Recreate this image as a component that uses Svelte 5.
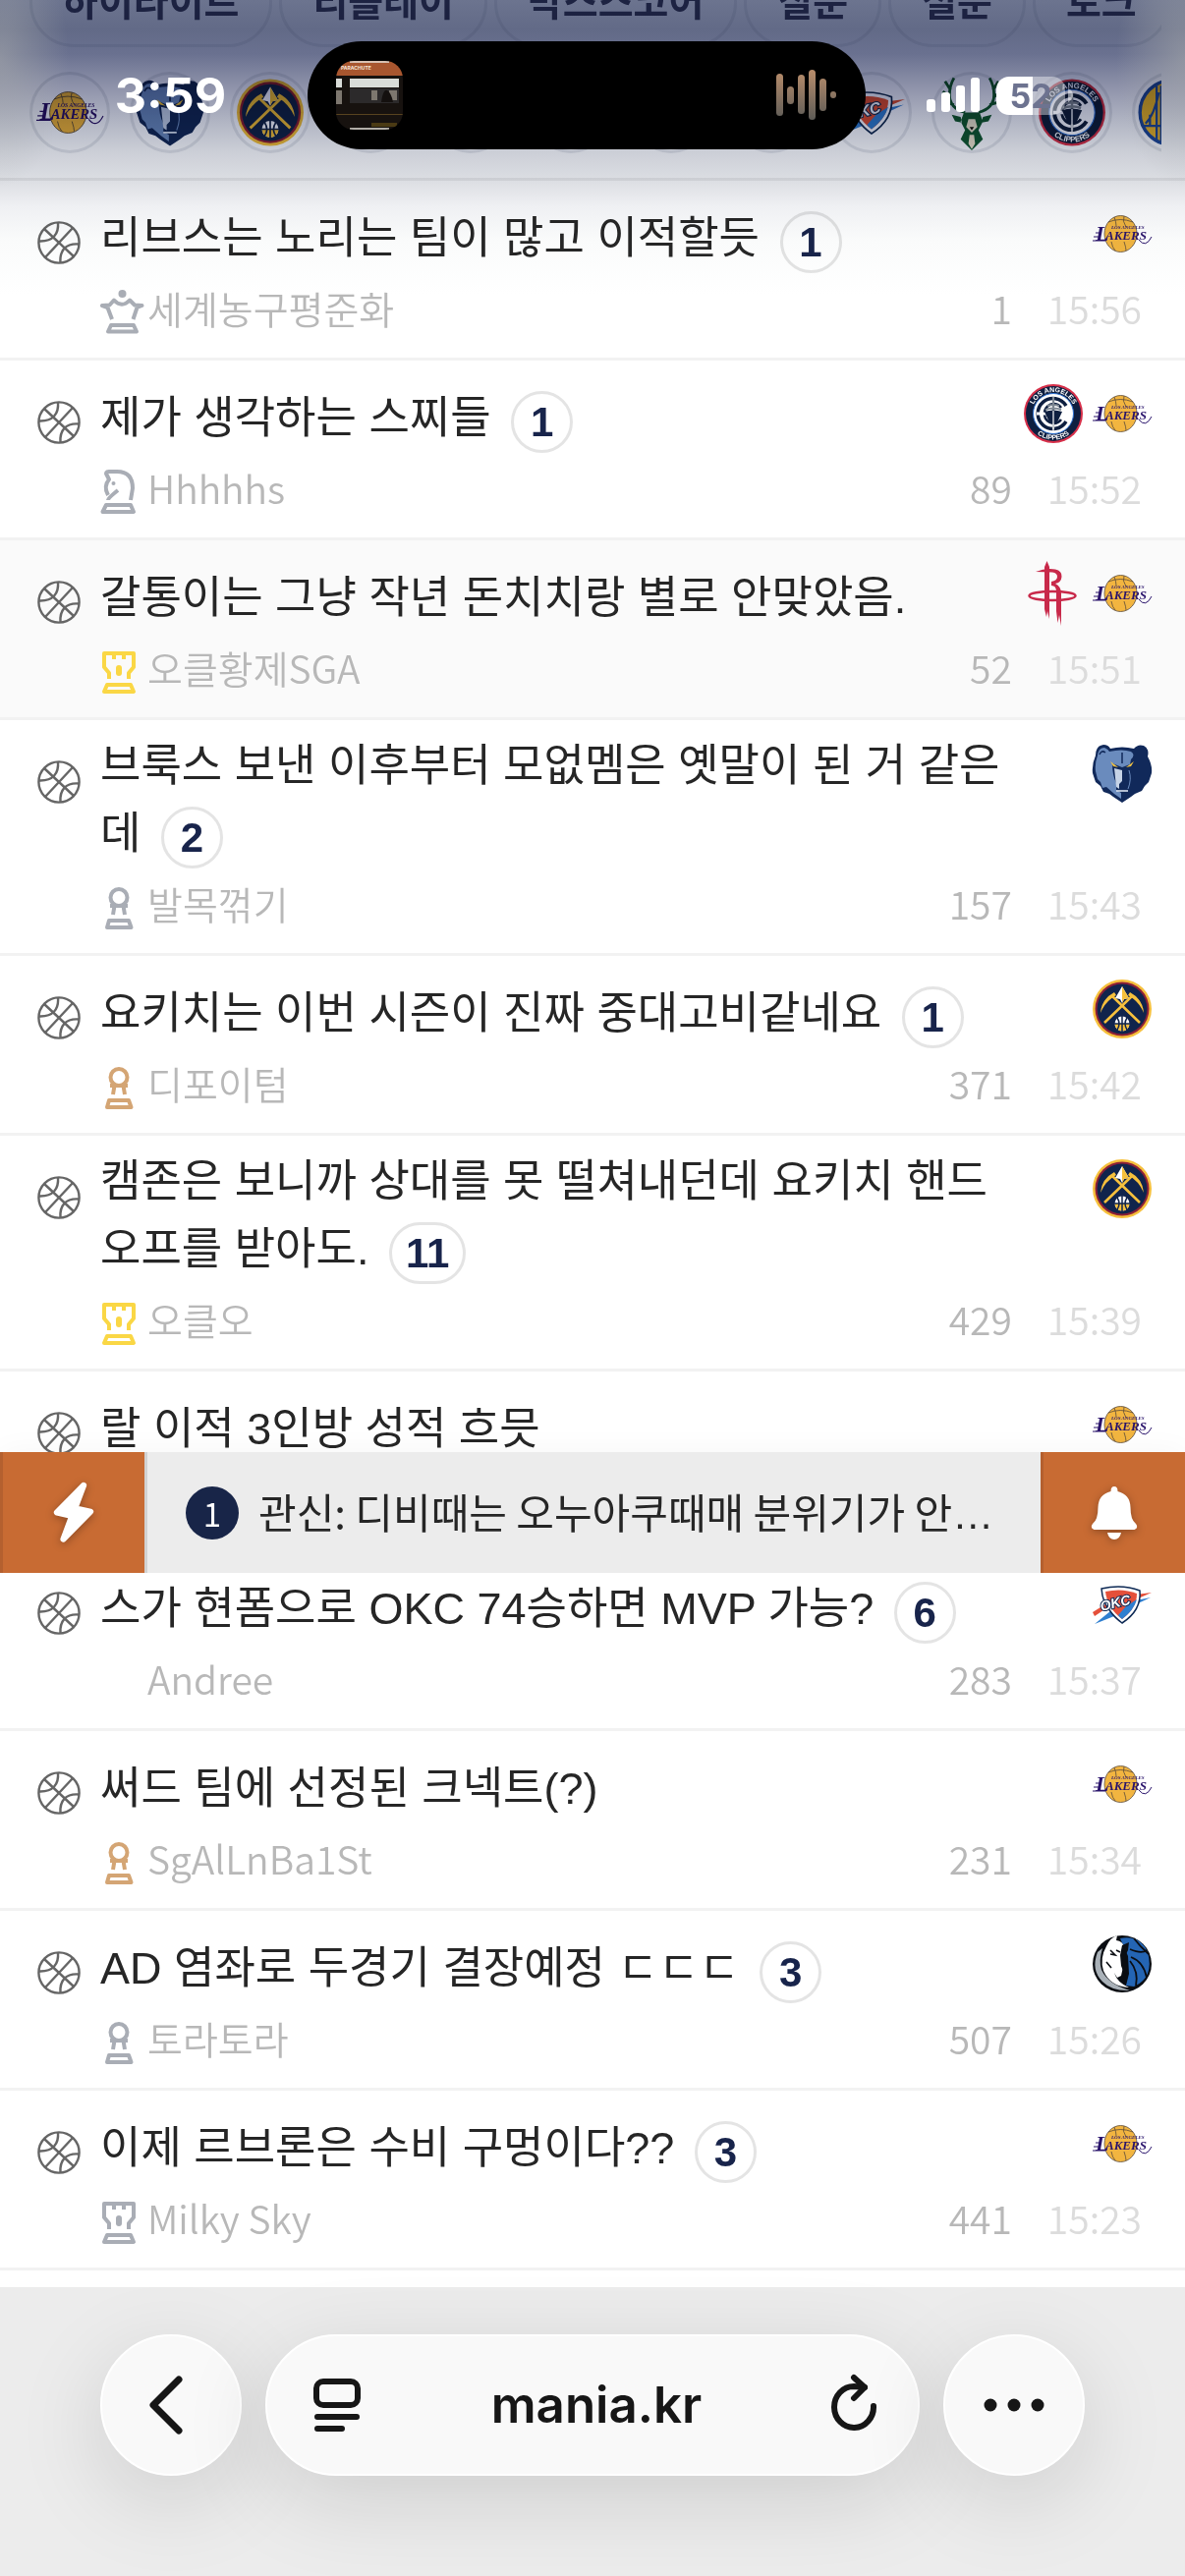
<script lang="ts">
  type Post = {
    title: string;
    comments?: number;
    rank?: string;
    tone?: string;
    author?: string;
    views?: number;
    time?: string;
    teams: string[];
    long?: boolean;
    seen?: boolean;
  };

  const chips = ['하이라이트', '리플레이', '박스스코어', '질문', '설문', '토크'];

  const crests = ['lakers', 'grizzlies', 'nuggets', '', '', '', '', '', 'thunder', 'bucks', 'clippers', 'warriors'];

  const posts: Post[] = [
    { title: '리브스는 노리는 팀이 많고 이적할듯', comments: 1, rank: 'queen', tone: 'silver', author: '세계농구평준화', views: 1, time: '15:56', teams: ['lakers'] },
    { title: '제가 생각하는 스찌들', comments: 1, rank: 'knight', tone: 'silver', author: 'Hhhhhs', views: 89, time: '15:52', teams: ['clippers', 'lakers'] },
    { title: '갈통이는 그냥 작년 돈치치랑 별로 안맞았음.', rank: 'rook', tone: 'gold', author: '오클황제SGA', views: 52, time: '15:51', teams: ['rockets', 'lakers'], seen: true },
    { title: '브룩스 보낸 이후부터 모없멤은 옛말이 된 거 같은데', comments: 2, rank: 'pawn', tone: 'silver', author: '발목꺾기', views: 157, time: '15:43', teams: ['grizzlies'], long: true },
    { title: '요키치는 이번 시즌이 진짜 중대고비같네요', comments: 1, rank: 'pawn', tone: 'bronze', author: '디포이텀', views: 371, time: '15:42', teams: ['nuggets'] },
    { title: '캠존은 보니까 상대를 못 떨쳐내던데 요키치 핸드오프를 받아도.', comments: 11, rank: 'rook', tone: 'gold', author: '오클오', views: 429, time: '15:39', teams: ['nuggets'], long: true },
    { title: '랄 이적 3인방 성적 흐믓', teams: ['lakers'] },
    { title: '스가 현폼으로 OKC 74승하면 MVP 가능?', comments: 6, author: 'Andree', views: 283, time: '15:37', teams: ['thunder'] },
    { title: '써드 팀에 선정된 크넥트(?)', rank: 'pawn', tone: 'bronze', author: 'SgAlLnBa1St', views: 231, time: '15:34', teams: ['lakers'] },
    { title: 'AD 염좌로 두경기 결장예정 ㄷㄷㄷ', comments: 3, rank: 'pawn', tone: 'silver', author: '토라토라', views: 507, time: '15:26', teams: ['mavericks'] },
    { title: '이제 르브론은 수비 구멍이다??', comments: 3, rank: 'rook', tone: 'silver', author: 'Milky Sky', views: 441, time: '15:23', teams: ['lakers'] }
  ];
</script>

{#snippet ball()}
  <svg class="ball" viewBox="0 0 44 44" fill="none" stroke="#666" stroke-width="2.4">
    <circle cx="22" cy="22" r="20.6" />
    <path d="M7 8 L37 36 M36 7 L8 37" />
    <path d="M21 1.5 C22 13 16 21 2 20.5" />
    <path d="M23.5 42.5 C22.5 30 29 22.5 42 23.5" />
  </svg>
{/snippet}

{#snippet rankIcon(kind: string | undefined)}
  <svg class="rank" viewBox="0 0 48 48" fill="none" stroke="currentColor" stroke-width="4" stroke-linejoin="round">
    {#if kind === 'queen'}
      <circle cx="22.5" cy="5" r="4" fill="currentColor" stroke="none" />
      <path d="M12 31 L7.5 19 L2 17 L9.500 16.5 L14 11.5 Q22 20 30 11.5 L35 16.5 L42.5 17 L37.5 19 L33.5 31" />
      <path d="M11 37 H34 L37 43.5 H8 Z" />
    {:else if kind === 'knight'}
      <path d="M8 32 Q8 30 18 22 M8 27 Q3 18 9 11 L6 5 Q6 2.5 10 3 H17 Q33 3 33 20 L31 32" />
      <circle cx="13.5" cy="15" r="2" fill="currentColor" stroke="none" />
      <path d="M6 37 H31 L34 44 H2.5 Z" />
    {:else if kind === 'rook'}
      <path d="M9 31 V25 L4 19 V5 H34 V19 L29 25 V31" />
      <path d="M14 5 V11 M24 5 V11" />
      <path d="M19 20 V25" stroke-width="6" stroke-linecap="round" />
      <path d="M7 37 H31 L34 44 H4 Z" />
    {:else if kind === 'pawn'}
      <circle cx="19" cy="13.5" r="8.5" />
      <path d="M10 22 H28 M14.5 22 L13 31 M23.5 22 L25 31" />
      <path d="M9 37 H29 L31.5 44 H7 Z" />
    {/if}
  </svg>
{/snippet}

{#snippet logo(team: string)}
  <svg class="logo" viewBox="0 0 60 68" role="img" aria-label={team}>
    {#if team === 'lakers'}
      <ellipse cx="28.5" cy="34" rx="16.5" ry="18.5" fill="#f2b540" stroke="#5a4a3a" stroke-width="0.8" />
      <path d="M16 22 Q28 17 41 22 M22 17 Q24 22 24 26 M32 16 Q30 21 34 27 M19 42 Q20 48 23 51 M32 42 Q34 48 34 51" fill="none" stroke="#5a4a3a" stroke-width="0.8" />
      <g class="wordmark" fill="#29136b">
        <text x="3" y="41" font-size="22">L</text>
        <text x="13" y="40" font-size="13">AKERS</text>
        <text x="19" y="29" font-size="5">LOS ANGELES</text>
      </g>
      <path d="M0 41 H13 M1 37 H7 M3 33 H8" stroke="#29136b" stroke-width="1" />
      <path d="M47 40 Q54 49 60 37" fill="none" stroke="#29136b" stroke-width="1" />
    {:else if team === 'clippers'}
      <circle cx="30" cy="34" r="30" fill="#d7304a" />
      <circle cx="30" cy="34" r="28" fill="#0e1f40" />
      <circle cx="30" cy="34" r="20.5" fill="#fff" stroke="#2b6fd0" stroke-width="1" />
      <path d="M43 26 A15.5 15.5 0 1 0 43 42" fill="none" stroke="#0e1f40" stroke-width="3.5" />
      <path d="M38 28 A9.5 10 0 1 0 38 40" fill="none" stroke="#0e1f40" stroke-width="2.5" />
      <path d="M13 34 H47" stroke="#fff" stroke-width="3" />
      <path d="M30 17 V50 M22 30 Q30 27 38 30 M24 26 Q30 24 36 26" stroke="#7d8792" stroke-width="2.2" fill="none" />
      <path d="M21 32 Q30 29 39 32 L34 43 Q30 46 26 43 Z" fill="#0e1f40" />
      <path d="M30 31 V53" stroke="#fff" stroke-width="1.2" />
      <path id="arc-top" d="M8 34 A22 22 0 0 1 52 34" fill="none" />
      <path id="arc-bottom" d="M3.5 34 A26.5 26.5 0 0 0 56.5 34" fill="none" />
      <g class="arc-text" fill="#fff" text-anchor="middle">
        <text font-size="7"><textPath href="#arc-top" startOffset="50%">LOS ANGELES</textPath></text>
        <text font-size="7"><textPath href="#arc-bottom" startOffset="50%">CLIPPERS</textPath></text>
      </g>
    {:else if team === 'rockets'}
      <ellipse cx="29" cy="36.5" rx="23.5" ry="4.5" fill="none" stroke="#c8294a" stroke-width="2.5" />
      <path d="M21 50 V7 L23.5 1 L26 7 V60 L24 52 L23 58 Z" fill="#c8294a" />
      <path d="M12 12 Q22 8 32 9.5 Q39 11 38.5 17 Q38 23 32 24 Q38 27 38 34 V67 L36 56 L34.5 64 L33 52 V32 Q33 26 28 26 V22 Q34 21 34 17 Q34 13 29 12.5 Q20 12 12 12 Z" fill="#c8294a" />
    {:else if team === 'grizzlies'}
      <path d="M3 16 Q3 6 11 5 Q16 5 18 9 Q30 6 42 9 Q46 4 52 6 Q58 9 56 17 Q61 26 60 34 L57 43 L53 47 L50 52 L43 55 L39 58 L30 64 L21 58 L17 55 L11 53 L8 47 L3 43 L0 34 Q-1 25 3 16 Z" fill="#11295a" />
      <path d="M5 16 Q6 8 12 8 Q15 9 17 12 Q30 9 39 12 Q44 15 39 20 L38 25 L30 28 L20 24 Q20 36 24 44 L24 51 L29 54 V60 L22 55 L14 48 L10 49 L8 43 L5 40 L3 32 Q2 24 5 16 Z" fill="#6a8bbd" />
      <path d="M22 29 L30 31 V42 L27 45 V50 L24 48 Z" fill="#c6d3e6" />
      <path d="M18 22 L26 28 L21 27 Z M42 22 L34 28 L39 27 Z" fill="#f4c443" />
      <path d="M24 52 H36" stroke="#dbe4f0" stroke-width="1.6" />
      <path d="M37 31 Q40 40 36 50" stroke="#6a8bbd" stroke-width="1" fill="none" />
      <path d="M30 13 V24 M7 15 Q9 10 13 13" stroke="#11295a" stroke-width="1.5" fill="none" />
    {:else if team === 'nuggets'}
      <circle cx="30" cy="34" r="30" fill="#f6c03c" />
      <circle cx="30" cy="34" r="27.5" fill="#8c2038" />
      <circle cx="30" cy="34" r="25.5" fill="#10244c" />
      <path d="M12 48 L40 21 M48 48 L20 21" stroke="#f6c03c" stroke-width="2.6" />
      <path d="M8 38 Q9 24 22 17 L24 20 Q13 26 8 38 Z M52 38 Q51 24 38 17 L36 20 Q47 26 52 38 Z" fill="#f6c03c" />
      <path d="M30 11 L37 23 L32 24 L30 28 L28 24 L23 23 Z" fill="#fff" />
      <path d="M30 11 L37 23 L32 24 L30 28 Z" fill="#f6c03c" />
      <circle cx="30" cy="49" r="7.5" fill="#fff" />
      <path d="M22.5 49 A7.5 7.5 0 0 0 37.5 49 Z" fill="#f6c03c" />
      <path d="M22 49 H38 M30 41 V57 M25 43 Q29 49 25 55 M35 43 Q31 49 35 55" stroke="#10244c" stroke-width="1.5" fill="none" />
    {:else if team === 'thunder'}
      <path d="M0 42 L16 32 L14 38 L2 46 Z M44 24 L60 22 L44 29 Z" fill="#e5503a" />
      <path d="M2 54 L18 41 L22 46 Z M44 30 L59 27 L44 34 Z" fill="#2f7fd0" />
      <path d="M9 18 Q30 13 48 20 Q50 40 30 53 Q22 47 18 41 Q10 32 9 18 Z" fill="#fff" stroke="#0e2a55" stroke-width="1.5" />
      <path d="M13 21 Q30 17 45 23 Q45 38 30 49 Q15 38 13 21 Z" fill="#e5503a" />
      <path d="M34 36 L45 29 Q42 40 30 49 Q27 47 26 45 Z" fill="#2f7fd0" />
      <text class="okc" x="9" y="41" font-size="14" fill="#fff" stroke="#0e2a55" stroke-width="2" paint-order="stroke" transform="rotate(-14 9 41)">OKC</text>
    {:else if team === 'mavericks'}
      <ellipse cx="30" cy="34" rx="30" ry="29" fill="#0a0d12" />
      <path d="M5 22 Q-2 40 10 52 Q20 62 38 61 Q16 55 9 40 Q6 31 10 18 Z" fill="#a9b1b8" />
      <path d="M28 8 Q48 4 56 22 Q63 48 42 57 L34 56 L37 44 L36 26 Z" fill="#2465b4" />
      <path d="M38 19 Q50 24 55 20 M39 27 Q52 32 55 48 M38 31 Q47 42 44 56 M42 8 Q48 16 57 24" stroke="#0a0d12" stroke-width="1.8" fill="none" />
      <path d="M14 16 Q18 7 25 5 L24 10 Q31 11 32 17 L29 25 L31 37 L29 46 L25 48 L22 43 Q25 53 37 58 Q18 57 11 41 Q7 28 14 16 Z" fill="#fff" />
      <path d="M18 20 L23 25 L18 24 M14 32 L19 38 M24 20 L28 22" stroke="#0a0d12" stroke-width="1.6" fill="none" />
      <path d="M30 15 L37 12 L36 20 L33 26 L36 38 L33 46 L29 36 L28 25 Z" fill="#0a0d12" />
    {:else if team === 'bucks'}
      <path d="M24 34 Q10 30 10 18 Q10 10 14 3 M11 14 L6 6 M10 20 L4 15 M14 27 L7 25 M36 34 Q50 30 50 18 Q50 10 46 3 M49 14 L54 6 M50 20 L56 15 M46 27 L53 25" fill="none" stroke="#0f5a35" stroke-width="2.5" />
      <path d="M23 34 H37 L40 42 L36 50 L40 58 L30 68 L20 58 L24 50 L20 42 Z M20 38 L12 36 L15 42 L21 43 Z M40 38 L48 36 L45 42 L39 43 Z" fill="#0f5a35" />
      <path d="M27 40 H33 L35 47 L30 52 L25 47 Z M28 54 H32 L33 62 L30 67 L27 62 Z" fill="#efe6cc" />
      <path d="M28 47 H32 L30 50 Z" fill="#111" />
    {:else if team === 'warriors'}
      <circle cx="30" cy="34" r="29" fill="#f0b832" stroke="#1d4a9c" stroke-width="3" />
      <path d="M16 10 V60 M20 10 V60 M4 46 H30 M10 46 V36 M6 44 Q14 36 18 16" stroke="#1d4a9c" stroke-width="2" fill="none" />
    {/if}
  </svg>
{/snippet}

<div class="page">
  <header class="top">
    <nav class="chips">
      {#each chips as chip}
        <a href="#board">{chip}</a>
      {/each}
    </nav>
    <div class="crests">
      {#each crests as team}
        <div class="crest">{#if team}{@render logo(team)}{/if}</div>
      {/each}
    </div>
  </header>

  <div class="shade"></div>

  <div class="status">
    <span class="clock">3:59</span>
    <div class="island">
      <svg class="art" viewBox="0 0 68 70">
        <rect width="68" height="70" fill="#17120f" />
        <rect width="68" height="15" fill="#a8562f" />
        <rect x="14" y="18" width="50" height="9" fill="#d9dcd8" />
        <rect x="0" y="18" width="6" height="9" fill="#d9dcd8" />
        <rect x="14" y="28" width="50" height="15" fill="#2c2a2b" />
        <path d="M36 30 h6 v10 h-6 z M54 30 h8 v10 h-8 z M0 30 h6 v14 h-6 z" fill="#7d776f" />
        <path d="M46 42 q2 -14 6 -12 t6 12 z" fill="#14100f" />
        <rect x="0" y="54" width="68" height="1" fill="#57431f" />
        <rect x="36" y="63" width="26" height="4" fill="#4a3a14" />
        <text x="5" y="9" font-size="5">PARACHUTE</text>
        <path d="M14 1 H54 M14 69 H54" stroke="#e8e4dc" stroke-width="1.5" />
      </svg>
      <svg class="wave" viewBox="0 0 62 52">
        <defs>
          <linearGradient id="wave-fill" x1="0" y1="0" x2="0" y2="52" gradientUnits="userSpaceOnUse">
            <stop offset="0%" stop-color="#b98d6b" />
            <stop offset="100%" stop-color="#5c5b57" />
          </linearGradient>
        </defs>
        <g fill="url(#wave-fill)">
          <rect x="0" y="4" width="7" height="43" rx="3.5" />
          <rect x="11" y="17" width="7" height="18" rx="3.5" />
          <rect x="22" y="5" width="7" height="40" rx="3.5" />
          <rect x="33" y="0" width="7" height="51" rx="3.5" />
          <rect x="44" y="9" width="7" height="33" rx="3.5" />
          <rect x="55" y="22" width="6" height="7" rx="3" />
        </g>
      </svg>
    </div>
    <div class="signals">
      <svg class="cell" viewBox="0 0 54 36" fill="#fff">
        <rect x="0" y="22" width="9" height="13" rx="3" />
        <rect x="15" y="15" width="9" height="20" rx="3" />
        <rect x="30" y="8" width="9" height="27" rx="3" />
        <rect x="45" y="0" width="9" height="35" rx="3" />
      </svg>
      <div class="battery">52</div>
      <svg class="nub" viewBox="0 0 5 14" fill="#fff" fill-opacity="0.5">
        <path d="M0 0 Q5 2 5 7 Q5 12 0 14 Z" />
      </svg>
    </div>
  </div>

  <ul class="posts" id="board">
    {#each posts as post}
      <li class="post" class:long={post.long} class:seen={post.seen}>
        {@render ball()}
        <h2>
          <a href="#board">{post.title}</a>
          {#if post.comments}<span class="count">{post.comments}</span>{/if}
        </h2>
        <div class="teams">
          {#each post.teams as team}
            {@render logo(team)}
          {/each}
        </div>
        <div class="meta {post.tone ?? ''}">
          {@render rankIcon(post.rank)}
          {#if post.author}
            <span class="author">{post.author}</span>
            <span class="views">{post.views}</span>
            <time>{post.time}</time>
          {/if}
        </div>
      </li>
    {/each}
  </ul>

  <aside class="ticker">
    <button class="flash" aria-label="속보">
      <svg viewBox="0 0 48 72" fill="#fff" stroke="#fff" stroke-width="7" stroke-linejoin="round">
        <path d="M35.5 4.5 L4.5 36 L22 40 L12 67 L43.5 35 L25.5 31 Z" />
      </svg>
    </button>
    <a class="headline" href="#board">
      <span class="order">1</span>
      <span class="text">관신: 디비때는 오누아쿠때매 분위기가 안<span class="more">…</span></span>
    </a>
    <button class="bell" aria-label="알림">
      <svg viewBox="0 0 48 54" fill="#fff">
        <path d="M24 0 Q27.5 0 27.5 5 Q40 8 40.5 21 Q40.5 34 46 38 Q49 42 44.5 44 H3.5 Q-1 42 2 38 Q7.5 34 7.5 21 Q8 8 20.5 5 Q20.5 0 24 0 Z" />
        <path d="M17 47 H31 Q29.5 54 24 54 Q18.5 54 17 47 Z" />
      </svg>
    </button>
  </aside>

  <footer class="browser">
    <button class="round" aria-label="뒤로">
      <svg width="46" height="60" viewBox="0 0 46 60" fill="none" stroke="#161616" stroke-width="7" stroke-linecap="round" stroke-linejoin="round">
        <path d="M31 4 L5 30 L31 56" />
      </svg>
    </button>
    <div class="address">
      <button aria-label="페이지 메뉴">
        <svg width="50" height="56" viewBox="0 0 50 56" fill="none" stroke="#161616" stroke-width="6" stroke-linecap="round">
          <rect x="4" y="4" width="42" height="24" rx="7" />
          <path d="M5 40 H45 M5 52 H30" />
        </svg>
      </button>
      <span class="host">mania.kr</span>
      <button aria-label="새로 고침">
        <svg width="48" height="64" viewBox="0 0 48 64" fill="none" stroke="#161616" stroke-width="6" stroke-linecap="round" stroke-linejoin="round">
          <path d="M43 33 A20 21 0 1 1 23 13 L34 14" />
          <path d="M23 4 L34 14 L23 25" />
        </svg>
      </button>
    </div>
    <button class="round" aria-label="더 보기">
      <svg width="62" height="14" viewBox="0 0 62 14" fill="#161616">
        <circle cx="7" cy="7" r="6.5" />
        <circle cx="31" cy="7" r="6.5" />
        <circle cx="55" cy="7" r="6.5" />
      </svg>
    </button>
  </footer>
</div>

<style>
  :global(body) {
    background: #fff;
  }

  .page {
    position: relative;
    display: flex;
    flex-direction: column;
    min-height: 100vh;
    overflow: hidden;
    font-family: "Liberation Sans", "Noto Sans CJK KR", sans-serif;
    color: #262626;
  }

  a {
    color: inherit;
    text-decoration: none;
  }

  button {
    display: flex;
    align-items: center;
    justify-content: center;
    border: none;
    padding: 0;
    background: none;
    cursor: pointer;
  }

  svg {
    display: block;
    flex: none;
  }

  /* Board shortcuts */
  .top {
    padding-left: 30px;
    padding-right: 24px;
    border-bottom: 3px solid #eee;
  }

  .chips {
    display: flex;
    align-items: flex-end;
    gap: 7px;
    height: 48px;
    overflow: hidden;
  }

  .chips a {
    flex: none;
    box-sizing: border-box;
    height: 90px;
    padding: 0 31px;
    border: 3px solid #eceef2;
    border-radius: 45px;
    font-size: 39px;
    font-weight: 700;
    line-height: 84px;
    color: #444c76;
  }

  .crests {
    display: flex;
    gap: 20px;
    padding: 25px 0;
    overflow: hidden;
  }

  .crest {
    flex: none;
    box-sizing: border-box;
    display: flex;
    align-items: center;
    justify-content: center;
    width: 82px;
    height: 83px;
    border: 3px solid #e6e8ec;
    border-radius: 50%;
  }

  .crest .logo {
    width: 68px;
    height: 77px;
  }

  .logo {
    width: 60px;
    height: 68px;
    overflow: visible;
  }

  .wordmark {
    font-family: "Liberation Serif", serif;
    font-style: italic;
    font-weight: 700;
  }

  .arc-text,
  .okc {
    font-weight: 700;
  }

  .okc {
    font-style: italic;
  }

  .shade {
    position: absolute;
    top: 0;
    left: 0;
    right: 0;
    height: 300px;
    mix-blend-mode: multiply;
    pointer-events: none;
    background:
      radial-gradient(70px 130px at 0 60px, rgba(165, 168, 170, 0.6), transparent),
      radial-gradient(70px 130px at 100% 60px, rgba(165, 168, 170, 0.6), transparent),
      linear-gradient(#6c748f 0, #626a87 30px, #6a7190 55px, #9094ab 90px, #b2b6c4 125px, #cccfd7 155px, #dcdee3 184px, #eff0f3 210px, #fafbfb 245px, #fff 300px);
  }

  /* Phone status bar */
  .status {
    position: absolute;
    top: 42px;
    left: 0;
    right: 0;
    display: grid;
    grid-template-columns: 1fr 568px 1fr;
    align-items: center;
    padding-right: 12px;
    font-family: Inter, sans-serif;
    color: #fff;
  }

  .clock {
    padding-left: 34px;
    text-align: center;
    font-size: 50px;
    font-weight: 700;
    line-height: 60px;
  }

  .island {
    box-sizing: border-box;
    display: flex;
    align-items: center;
    justify-content: space-between;
    height: 110px;
    padding: 0 29px;
    border-radius: 55px;
    background: #000;
  }

  .art {
    width: 68px;
    height: 70px;
    border-radius: 18px;
  }

  .art text {
    fill: #f4e6da;
    font-weight: 700;
  }

  .wave {
    width: 62px;
    height: 52px;
  }

  .signals {
    display: flex;
    align-items: center;
    padding-left: 62px;
  }

  .cell {
    width: 54px;
    height: 36px;
  }

  .battery {
    width: 70px;
    height: 39px;
    margin-left: 17px;
    border-radius: 13px;
    background: linear-gradient(90deg, #fff 53%, rgba(255, 255, 255, 0.4) 53%);
    color: #6d7390;
    font-size: 34px;
    font-weight: 700;
    line-height: 39px;
    text-align: center;
  }

  .nub {
    width: 5px;
    height: 14px;
    margin-left: 3px;
  }

  /* Post list */
  .posts {
    margin: 0;
    padding: 0 0 17px;
    list-style: none;
  }

  .post {
    display: grid;
    grid-template-columns: 44px 1fr auto;
    column-gap: 20px;
    padding: 0 34px 22px 38px;
    border-bottom: 3px solid #f2f2f2;
  }

  .post.seen {
    background: #fafafa;
  }

  .ball {
    grid-row: 1 / 3;
    width: 44px;
    height: 44px;
    margin-top: 41px;
  }

  h2 {
    margin: 0;
    padding: 24px 50px 0 0;
    font-size: 45px;
    font-weight: 400;
    line-height: 69px;
  }

  .long h2 {
    padding-top: 12px;
  }

  .count {
    box-sizing: border-box;
    display: inline-block;
    min-width: 63px;
    height: 63px;
    margin: -8px 0 -8px 8px;
    padding: 0 14px;
    border: 3px solid #e4e4e4;
    border-radius: 32px;
    color: #18244b;
    font-size: 42px;
    font-weight: 700;
    line-height: 57px;
    text-align: center;
    vertical-align: middle;
  }

  .teams {
    display: flex;
    gap: 10px;
    padding-top: 20px;
  }

  .meta {
    grid-column: 2 / 4;
    display: flex;
    align-items: flex-start;
    height: 48px;
    margin-top: 17px;
    padding-right: 10px;
    font-family: "Noto Sans CJK KR", sans-serif;
    font-size: 39px;
    font-weight: 350;
    line-height: 39px;
    color: #b8b8b8;
  }

  .rank {
    width: 48px;
    height: 48px;
  }

  .silver .rank {
    color: #a9adb5;
  }

  .gold .rank {
    color: #fad745;
  }

  .bronze .rank {
    color: #d4a574;
  }

  .author {
    flex: 1;
  }

  time {
    margin-left: 36px;
    color: #dcdcdc;
  }

  /* Live ticker floating over the list */
  .ticker {
    position: absolute;
    top: 1478px;
    left: 0;
    right: 0;
    display: flex;
    height: 123px;
    background: #ececec;
    box-shadow: 0 0 30px rgba(0, 0, 0, 0.04);
    clip-path: inset(-30px 0 0 0);
  }

  .ticker button {
    box-sizing: border-box;
    flex: none;
    width: 147px;
    background: #c86b33;
    border-left: 3px solid #b4602f;
  }

  .ticker button svg {
    filter: drop-shadow(0 2px 4px rgba(0, 0, 0, 0.3));
  }

  .flash svg {
    width: 42px;
    height: 63px;
  }

  .bell svg {
    width: 48px;
    height: 54px;
  }

  .headline {
    flex: 1;
    min-width: 0;
    display: flex;
    align-items: center;
    gap: 20px;
    padding-left: 39px;
    border-left: 3px solid #d2d2d2;
    font-family: "Noto Sans CJK KR", sans-serif;
  }

  .order {
    flex: none;
    width: 54px;
    height: 54px;
    border-radius: 50%;
    background: #182548;
    color: #fff;
    font-size: 33px;
    line-height: 54px;
    text-align: center;
  }

  .text {
    overflow: hidden;
    font-size: 42px;
    line-height: 69px;
    white-space: nowrap;
  }

  .more {
    font-family: "Liberation Sans", sans-serif;
  }

  /* Browser toolbar */
  .browser {
    flex: 1;
    display: flex;
    align-items: flex-start;
    gap: 24px;
    padding: 48px 102px;
    background: #ececec;
  }

  .round,
  .address {
    box-sizing: border-box;
    height: 144px;
    border: 2px solid #fff;
    border-radius: 72px;
    background: #f9f9f9;
    box-shadow: 0 24px 90px rgba(0, 0, 0, 0.13);
  }

  .round {
    flex: none;
    width: 144px;
  }

  .address {
    flex: 1;
    display: flex;
    align-items: center;
    justify-content: space-between;
    padding: 0 40px 0 46px;
  }

  .host {
    font-family: Inter, sans-serif;
    font-size: 51px;
    font-weight: 600;
    line-height: 60px;
    color: #161616;
  }
</style>
